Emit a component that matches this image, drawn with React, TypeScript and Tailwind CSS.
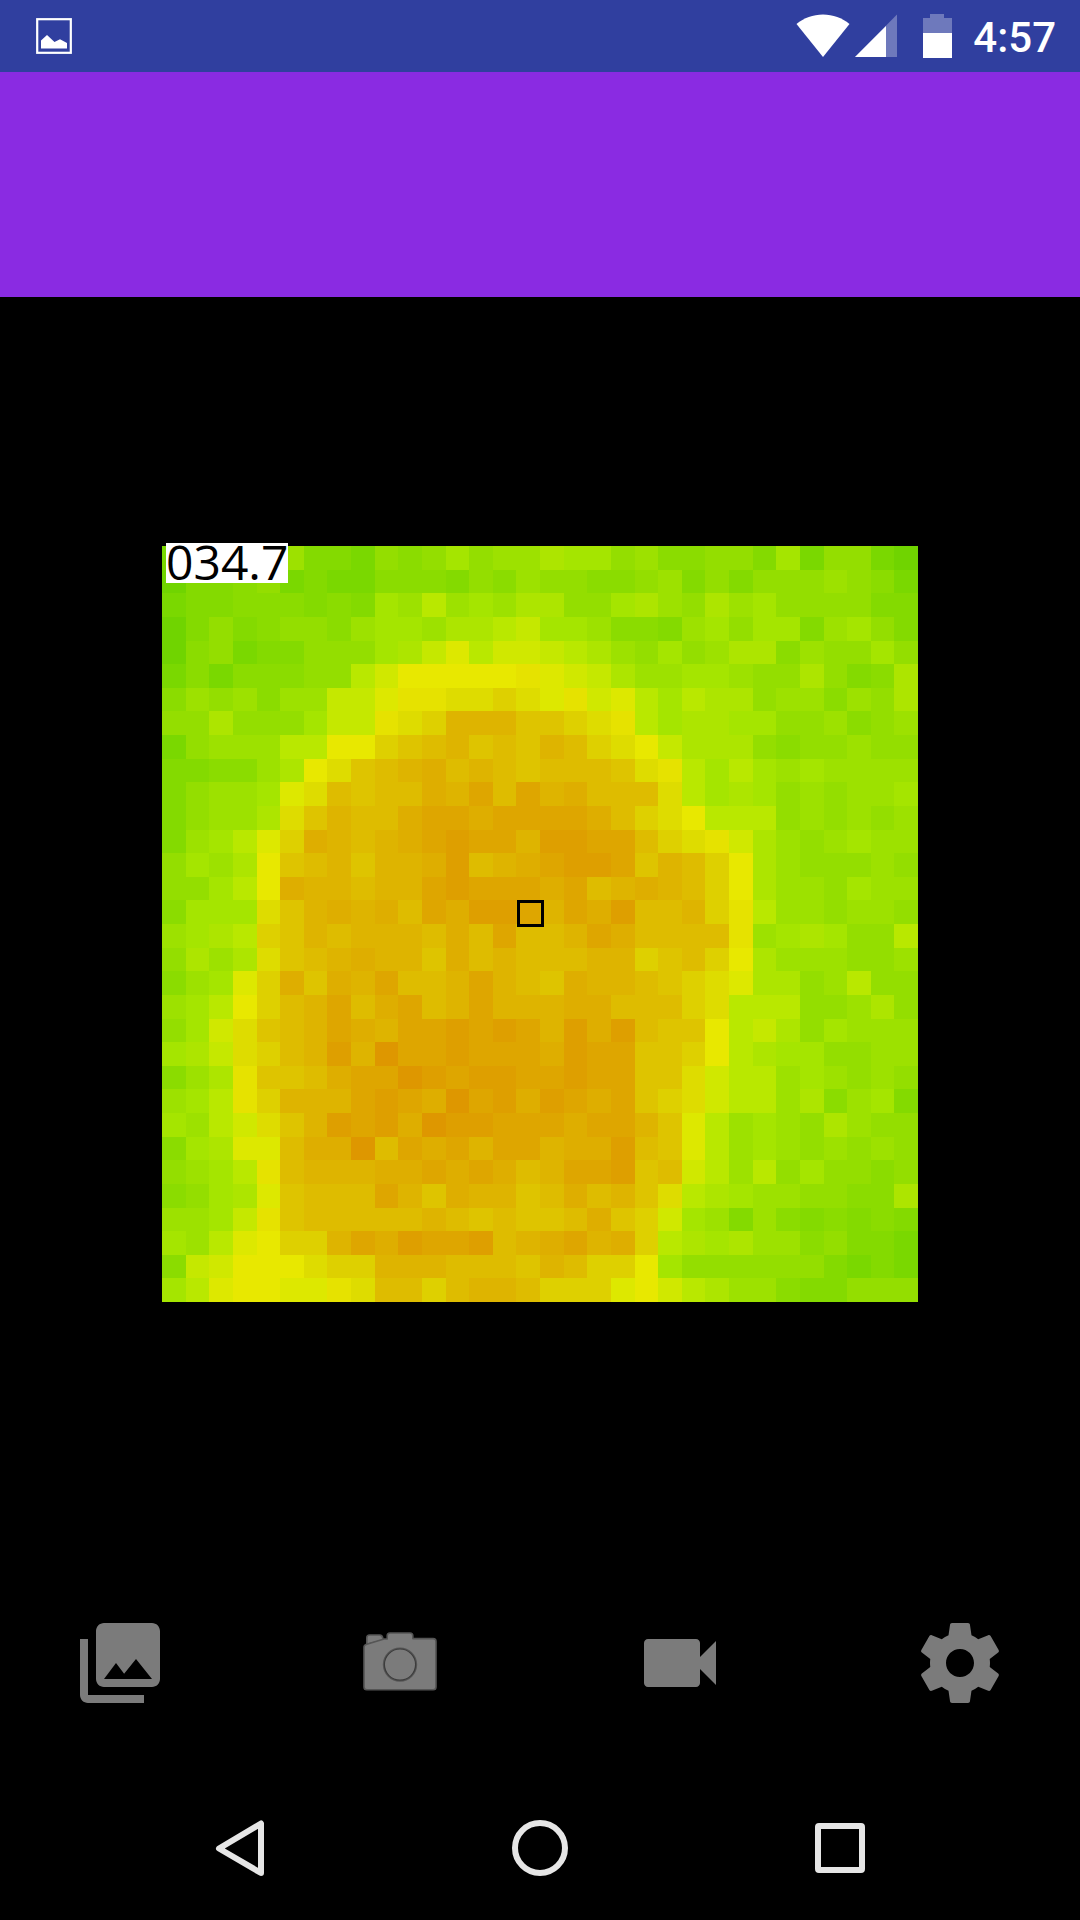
import React from "react";

const PALETTE: Record<string, string> = {
  "0": "#70d400",
  "1": "#7ad800",
  "2": "#84da00",
  "3": "#8bdc00",
  "4": "#94de00",
  "5": "#9de100",
  "6": "#a5e500",
  "7": "#ade500",
  "8": "#b9e800",
  "9": "#c5e800",
  a: "#d0e800",
  b: "#dde800",
  c: "#e8e800",
  d: "#e6e200",
  e: "#dedc00",
  f: "#ded000",
  g: "#dec400",
  h: "#debc00",
  i: "#deb400",
  j: "#deae00",
  k: "#dea600",
  l: "#de9f00",
  m: "#de9700",
};

const ROWS = [
  "1333352214346455" + "7664533442614410",
  "0223412113332435" + "4433452424445431",
  "1223332326585657" + "7446754756444422",
  "0242344356657789" + "6653325646625642",
  "034122444679b8aa" + "9875464577354464",
  "131333448acccccd" + "ba97556654474237",
  "354535599bddeefe" + "bdab868774553547",
  "447444699defiiig" + "gfed867766445345",
  "1455588ccfghighg" + "ihfec97774344544",
  "223357ceghijhihg" + "hhhged8686565555",
  "24556behghhjikhk" + "ijhhhe8676454556",
  "24557egihhjkkjkk" + "kkjhfec888454545",
  "2568bfjihijklkki" + "llkkhfeda7545655",
  "4657cghigiijlhij" + "kllkgihfc7544454",
  "4468cjiihiiklkkk" + "jkhijihfc7554655",
  "3666egijijhkjllk" + "ikjlhhifd8554554",
  "5678fgihiiihjhkh" + "hikjhhhhd5676448",
  "4757eghijiigjhih" + "hhiifghfc7555445",
  "356bfjgjikhhikih" + "gjiihgfeb7745844",
  "568cfhikhjkhikii" + "ijjhhhfe88844574",
  "46aeghikjikklklk" + "iljlhggc89746555",
  "679efhilimkklkkk" + "jlkkggfc87664455",
  "357dgghjkkmlkllk" + "klkkggea88565454",
  "568dfiiiklkjmklj" + "lkjkgfea88573562",
  "658aegilkljmllkk" + "kjkkigb856547544",
  "367bbhjjmhkjkikk" + "ijjlhgb856545454",
  "4568dhiiijjkjkjh" + "ikklgha858464434",
  "3467bghhhkigjiig" + "hjhige8765544337",
  "5569dghhhhhihghg" + "ghjgfa6525323232",
  "658bcffikjlkklhi" + "jkijf87675534221",
  "39accceffiiihhhg" + "ihffc64444442121",
  "68bccbbdehhfhiih" + "fffbca8755322444",
];

function StatusBar() {
  return (
    <header className="flex h-[72px] items-center justify-between bg-[#303f9f] pr-6 pl-9 text-white">
      <svg className="size-9" viewBox="0 0 36 36" fill="none">
        <rect x="1.2" y="1.2" width="33.6" height="33.6" stroke="currentColor" strokeWidth="2.2" />
        <path d="M5 30.5V22.5L11 17L18.500 24L24 21.300L31 25V30.500Z" fill="currentColor" />
      </svg>
      <div className="flex items-center">
        <svg className="h-[44px] w-[54px]" viewBox="0 0 54 44">
          <path d="M0.500 10C8 4 17 0.500 27 0.500S46 4 53.500 10L27 43Z" fill="currentColor" />
        </svg>
        <svg className="ml-1 h-[44px] w-[44px]" viewBox="0 0 44 44">
          <path d="M1 43L43 0.500V43Z" fill="currentColor" opacity="0.3" />
          <path d="M1 43L32 12V43Z" fill="currentColor" />
        </svg>
        <svg className="ml-6 h-[44px] w-[30px]" viewBox="0 0 30 44">
          <path d="M1 4H8V0H22V4H30V19H1Z" fill="currentColor" opacity="0.3" />
          <rect x="1" y="19" width="29" height="25" fill="currentColor" />
        </svg>
        <time className="ml-[21px] pt-1 font-['Roboto',sans-serif] text-[42px] leading-[48px] font-medium">4:57</time>
      </div>
    </header>
  );
}

function ThermalView() {
  return (
    <figure className="relative aspect-square w-[70%]">
      <svg className="block size-full" viewBox="0 0 32 32" shapeRendering="crispEdges" role="img" aria-label="Thermal image">
        {ROWS.map((row, y) =>
          row.split("").map((level, x) => (
            <rect key={`${x}-${y}`} x={x} y={y} width="1" height="1" fill={PALETTE[level]} />
          )),
        )}
      </svg>
      <div className="absolute top-[46.800%] left-[46.900%] size-[27px] border-[3px] border-black" />
      <figcaption className="absolute -top-[3px] left-1 h-10 bg-white font-['Open_Sans',sans-serif] text-[48px] leading-[38px] text-black">
        034.7
      </figcaption>
    </figure>
  );
}

function ToolButton({ label, children }: { label: string; children: React.ReactNode }) {
  return (
    <button type="button" aria-label={label} className="size-24 text-[#7b7b7b]">
      <svg className="size-full" viewBox="0 0 24 24" fill="currentColor">
        {children}
      </svg>
    </button>
  );
}

function Toolbar() {
  return (
    <div className="flex justify-between px-[72px] pb-[65px]">
      <ToolButton label="Gallery">
        <path d="M22 16V4c0-1.100-.9-2-2-2H8c-1.100 0-2 .9-2 2v12c0 1.100.9 2 2 2h12c1.100 0 2-.9 2-2zm-11-4l2.030 2.710L16 11l4 5H8l3-4zM2 6v14c0 1.100.9 2 2 2h14v-2H4V6H2z" />
      </ToolButton>
      <ToolButton label="Take photo">
        <g stroke="#555555" strokeWidth="0.4" strokeLinejoin="round">
          <path d="M3.700 7.300V5.700Q3.700 5 4.400 5H6.900Q7.600 5 7.700 5.800V6.300Z" />
          <path d="M3.700 7.300L8 6H8.800V5.200Q8.800 4.500 9.500 4.500H14.500Q15.200 4.500 15.200 5.200V5.900H20.300Q21 5.900 21 6.600V18Q21 18.700 20.300 18.700H3.700Q3 18.700 3 18V8Q3 7.500 3.700 7.300Z" />
          <circle cx="12" cy="12.400" r="3.900" strokeWidth="0.800" />
          <circle cx="12" cy="12.400" r="3.900" stroke="#3c3c3c" strokeWidth="0.300" />
        </g>
      </ToolButton>
      <ToolButton label="Record video">
        <path d="M17 10.500V7c0-.55-.45-1-1-1H4c-.55 0-1 .45-1 1v10c0 .55.45 1 1 1h12c.55 0 1-.45 1-1v-3.500l4 4v-11l-4 4z" />
      </ToolButton>
      <ToolButton label="Settings">
        <path d="M19.430 12.980c.04-.32.07-.64.07-.98s-.03-.66-.07-.98l2.110-1.650c.19-.15.24-.42.12-.64l-2-3.460c-.12-.22-.39-.3-.61-.22l-2.490 1c-.52-.4-1.080-.73-1.690-.98l-.38-2.650C14.460 2.180 14.250 2 14 2h-4c-.25 0-.46.18-.49.42l-.38 2.650c-.61.25-1.170.59-1.690.98l-2.490-1c-.23-.09-.49 0-.61.22l-2 3.460c-.13.22-.07.49.12.64l2.110 1.650c-.04.32-.07.65-.07.98s.03.66.07.98l-2.110 1.650c-.19.15-.24.42-.12.64l2 3.460c.12.22.39.3.61.22l2.490-1c.52.4 1.080.73 1.690.98l.38 2.650c.03.24.24.42.49.42h4c.25 0 .46-.18.49-.42l.38-2.650c.61-.25 1.170-.59 1.690-.98l2.490 1c.23.09.49 0 .61-.22l2-3.460c.12-.22.07-.49-.12-.64l-2.110-1.650zM12 15.500c-1.930 0-3.500-1.570-3.500-3.500s1.570-3.500 3.500-3.500 3.500 1.570 3.500 3.500-1.570 3.500-3.500 3.500z" />
      </ToolButton>
    </div>
  );
}

function NavButton({ label, children }: { label: string; children: React.ReactNode }) {
  return (
    <button type="button" aria-label={label} className="flex items-center justify-center">
      <svg className="size-[60px]" viewBox="0 0 60 60" fill="none" stroke="#e6e6e6" strokeWidth="6" strokeLinejoin="round">
        {children}
      </svg>
    </button>
  );
}

export default function App() {
  return (
    <div className="flex min-h-screen flex-col bg-black">
      <StatusBar />
      <div className="h-[225px] bg-[#8a2be2]" />
      <main className="flex flex-1 items-start justify-center pt-[249px]">
        <ThermalView />
      </main>
      <Toolbar />
      <nav className="grid h-36 grid-cols-3 px-[90px]">
        <NavButton label="Back">
          <path d="M9 30.500L51 5.500V55Z" />
        </NavButton>
        <NavButton label="Home">
          <circle cx="30" cy="30" r="25" />
        </NavButton>
        <NavButton label="Recent apps">
          <rect x="8" y="8" width="44" height="44" rx="1" />
        </NavButton>
      </nav>
    </div>
  );
}
